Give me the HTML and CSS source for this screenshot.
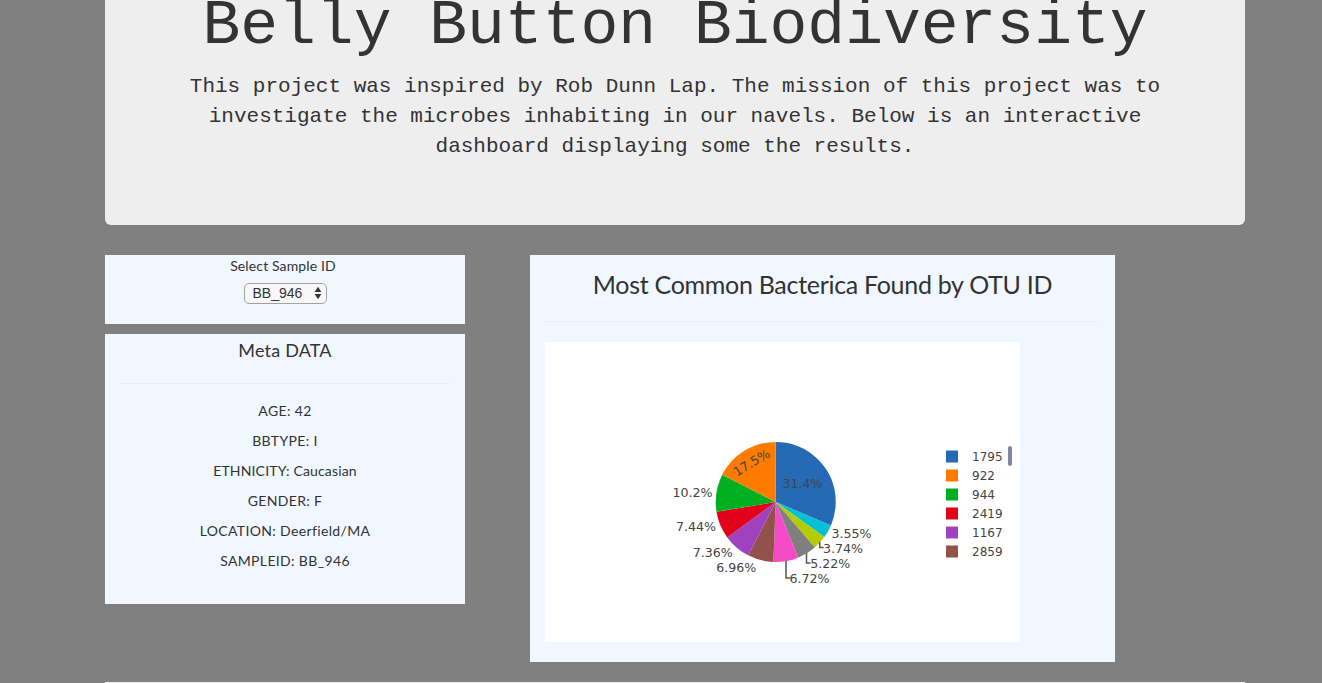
FILE: index.html
```html
<!DOCTYPE html>
<html lang="en">
<head>
<meta charset="utf-8">
<title>Belly Button Biodiversity</title>
<link rel="stylesheet" href="styles.css">
</head>
<body>
<div class="container">
  <header class="jumbotron">
    <h1 class="title">Belly Button Biodiversity</h1>
    <p class="intro">This project was inspired by Rob Dunn Lap. The mission of this project was to investigate the microbes inhabiting in our navels. Below is an interactive dashboard displaying some the results.</p>
  </header>
  <main class="row">
    <div class="sidebar">
      <section class="panel picker">
        <div class="picker-label">Select Sample ID</div>
        <button class="select" type="button"><span>BB_946</span>
          <svg class="arrows" width="8" height="14" viewBox="0 0 8 14"><path d="M.7 6 4 .8 7.3 6zM.7 8 4 13.2 7.3 8z"/></svg>
        </button>
      </section>
      <section class="panel meta">
        <h4 class="meta-title">Meta DATA</h4>
        <hr class="rule">
        <div class="meta-list">
          <p>AGE: 42</p>
          <p>BBTYPE: I</p>
          <p class="ethnicity">ETHNICITY: Caucasian</p>
          <p>GENDER: F</p>
          <p>LOCATION: Deerfield/MA</p>
          <p>SAMPLEID: BB_946</p>
        </div>
      </section>
    </div>
    <section class="panel chart-panel">
      <h3 class="chart-title">Most Common Bacterica Found by OTU ID</h3>
      <hr class="rule">
      <svg class="chart" width="475" height="300" viewBox="0 0 475 300">
        <g class="pie" transform="translate(230.7 160) rotate(-90)">
          <circle r="30" pathLength="100" stroke="#266ab6" stroke-dasharray="31.4 100"/>
          <circle r="30" pathLength="100" stroke="#00c1d5" stroke-dasharray="3.55 100" stroke-dashoffset="-31.4"/>
          <circle r="30" pathLength="100" stroke="#b5cc00" stroke-dasharray="3.74 100" stroke-dashoffset="-34.95"/>
          <circle r="30" pathLength="100" stroke="#7f7f7f" stroke-dasharray="5.22 100" stroke-dashoffset="-38.69"/>
          <circle r="30" pathLength="100" stroke="#f54bc6" stroke-dasharray="6.72 100" stroke-dashoffset="-43.91"/>
          <circle r="30" pathLength="100" stroke="#91524a" stroke-dasharray="6.96 100" stroke-dashoffset="-50.63"/>
          <circle r="30" pathLength="100" stroke="#a042c0" stroke-dasharray="7.36 100" stroke-dashoffset="-57.59"/>
          <circle r="30" pathLength="100" stroke="#e2001a" stroke-dasharray="7.44 100" stroke-dashoffset="-64.95"/>
          <circle r="30" pathLength="100" stroke="#00b020" stroke-dasharray="10.11 100" stroke-dashoffset="-72.39"/>
          <circle r="30" pathLength="100" stroke="#ff7b00" stroke-dasharray="17.5 100" stroke-dashoffset="-82.5"/>
        </g>
        <path class="leader" d="M274.7 200v5.5h4M261.5 211v10h4M241 219v17h4"/>
        <g class="label percent">
          <text x="237.5" y="146">31.4%</text>
          <text x="-20" y="4.5" transform="translate(206.5 120.5) rotate(-31)">17.5%</text>
          <text x="127.5" y="155">10.2%</text>
          <text x="131" y="189">7.44%</text>
          <text x="147.7" y="215">7.36%</text>
          <text x="171.3" y="230">6.96%</text>
          <text x="286.4" y="196">3.55%</text>
          <text x="278" y="211">3.74%</text>
          <text x="265.3" y="226">5.22%</text>
          <text x="244.5" y="241">6.72%</text>
        </g>
        <g class="label">
          <text x="427" y="119">1795</text>
          <text x="427" y="138">922</text>
          <text x="427" y="157">944</text>
          <text x="427" y="176">2419</text>
          <text x="427" y="195">1167</text>
          <text x="427" y="214">2859</text>
        </g>
        <rect x="401" y="108.5" width="12" height="12" fill="#266ab6"/>
        <rect x="401" y="127.5" width="12" height="12" fill="#ff7b00"/>
        <rect x="401" y="146.5" width="12" height="12" fill="#00b020"/>
        <rect x="401" y="165.5" width="12" height="12" fill="#e2001a"/>
        <rect x="401" y="184.5" width="12" height="12" fill="#a042c0"/>
        <rect x="401" y="203.5" width="12" height="12" fill="#91524a"/>
        <rect x="463" y="104" width="4" height="20" rx="2" fill="#8083aa"/>
      </svg>
    </section>
  </main>
  <section class="next-panel"></section>
</div>
</body>
</html>
```
FILE: styles.css
```css
* { box-sizing: border-box; }
body {
  margin: 0;
  background: #808080;
  color: #333;
  font-family: Papyrus, Lato, sans-serif;
}
.container { width: 1140px; margin-left: 105px; }
.jumbotron {
  height: 225px;
  padding: 0 60px;
  background: #eee;
  border-radius: 0 0 6px 6px;
  text-align: center;
  font-family: "Courier New", "Liberation Mono", monospace;
}
.title { margin: 0; padding-top: 2px; height: 72px; font-size: 63px; line-height: 50px; font-weight: 400; white-space: nowrap; }
.intro { margin: 0; font-size: 21px; line-height: 30px; }
.row { display: flex; align-items: flex-start; gap: 65px; margin-top: 30px; }
.sidebar { display: flex; flex-direction: column; gap: 10px; width: 360px; }
.panel { background: #f0f7ff; text-align: center; }
.picker { height: 69px; padding-right: 4px; }
.picker-label { height: 27px; font-size: 14px; line-height: 22px; letter-spacing: .13px; }
.select {
  display: inline-flex;
  align-items: center;
  justify-content: space-between;
  width: 83px;
  height: 21px;
  margin-left: 4px;
  padding: 0 4px 0 8px;
  border: 1px solid #a3a3a3;
  border-radius: 5px;
  background: #f8f8f8;
  color: #333;
  font: 14px/18px "Liberation Sans", sans-serif;
}
.arrows { fill: #333; }
.meta { height: 270px; padding: 0 15px; }
.meta-title { margin: 0; height: 49px; font-size: 18px; line-height: 33px; font-weight: 400; letter-spacing: .2px; }
.rule { margin: 0; border: 0; border-top: 1px solid #eceef0; }
.meta-list { padding-top: 12px; font-size: 14px; line-height: 30px; letter-spacing: .35px; }
.meta-list p { margin: 0; }
.meta-list .ethnicity { letter-spacing: .16px; }
.chart-panel { width: 585px; height: 407px; padding: 0 15px; }
.chart-panel .rule { margin-right: 1px; }
.chart-title { margin: 0; height: 66px; font-size: 25px; line-height: 58px; font-weight: 400; letter-spacing: -.3px; white-space: nowrap; }
.chart { display: block; margin-top: 20px; background: #fff; }
.pie circle { fill: none; stroke-width: 60; }
.leader { fill: none; stroke: #555; stroke-width: 1.5; }
.label { fill: #444; font: 12px Verdana, "DejaVu Sans", sans-serif; }
.percent { font-size: 12.6px; }
.next-panel { height: 1px; margin-top: 20px; background: #f0f0f0; }
```
